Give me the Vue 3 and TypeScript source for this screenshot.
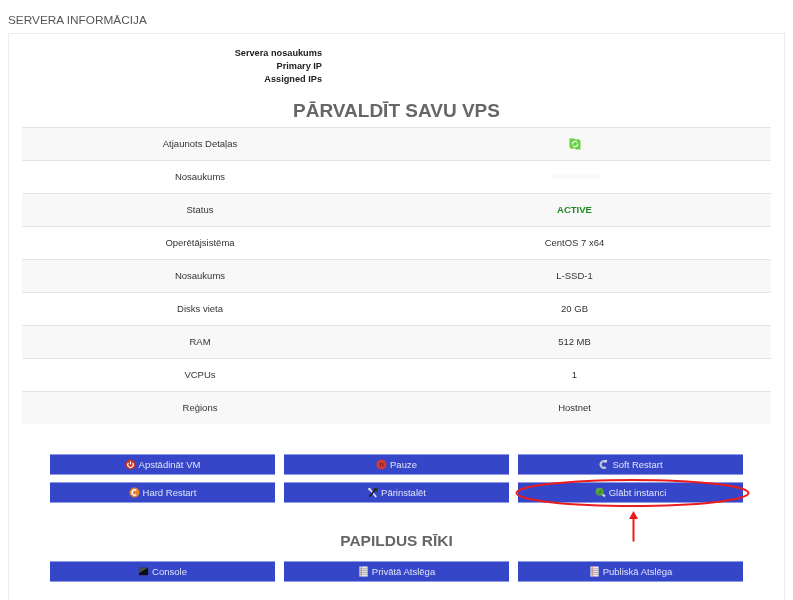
<script setup lang="ts">
const info: string[] = ['Servera nosaukums', 'Primary IP', 'Assigned IPs']
const rows: { label: string; value: string; kind?: string }[] = [
  { label: 'Atjaunots Detaļas', value: '', kind: 'refresh' },
  { label: 'Nosaukums', value: '', kind: 'hidden' },
  { label: 'Status', value: 'ACTIVE', kind: 'status' },
  { label: 'Operētājsistēma', value: 'CentOS 7 x64' },
  { label: 'Nosaukums', value: 'L-SSD-1' },
  { label: 'Disks vieta', value: '20 GB' },
  { label: 'RAM', value: '512 MB' },
  { label: 'VCPUs', value: '1' },
  { label: 'Reģions', value: 'Hostnet' },
]
const actions: { label: string; icon: string }[] = [
  { label: 'Apstādināt VM', icon: 'power' },
  { label: 'Pauze', icon: 'pause' },
  { label: 'Soft Restart', icon: 'soft' },
  { label: 'Hard Restart', icon: 'hard' },
  { label: 'Pārinstalēt', icon: 'tools' },
  { label: 'Glābt instanci', icon: 'rescue' },
]
const tools: { label: string; icon: string }[] = [
  { label: 'Console', icon: 'console' },
  { label: 'Privātā Atslēga', icon: 'sheet' },
  { label: 'Publiskā Atslēga', icon: 'sheet' },
]
</script>

<template>
  <div class="page">
    <h2 class="title">SERVERA INFORMĀCIJA</h2>
    <section class="panel">
      <div class="info">
        <div v-for="item in info" :key="item" class="info-label">{{ item }}</div>
      </div>
      <h1 class="head">PĀRVALDĪT SAVU VPS</h1>
      <div class="table">
        <div v-for="(row, i) in rows" :key="i" class="row" :class="{ odd: i % 2 === 0 }">
          <div class="cell">{{ row.label }}</div>
          <div class="cell">
            <svg v-if="row.kind === 'refresh'" class="refresh" viewBox="0 0 12 12" width="12" height="12">
              <path d="M0.500 0.500H5L6 1.500H9.500L9.500 0.500L11.500 3V8L11.500 11.500H7L6 10.500H2.500V11.500L0.500 9Z" fill="#66cf42" />
              <path d="M3.300 6.500A2.700 2.700 0 0 1 8 4.300M8.700 5.500A2.700 2.700 0 0 1 4 7.700" fill="none" stroke="#eefae6" stroke-width="1.200" />
            </svg>
            <span v-else-if="row.kind === 'hidden'" class="smudge"></span>
            <span v-else :class="{ active: row.kind === 'status' }">{{ row.value }}</span>
          </div>
        </div>
      </div>

      <div class="buttons first">
        <button v-for="a in actions" :key="a.label" class="btn" type="button">
          <svg class="ico" viewBox="0 0 12 12" width="11" height="11" :class="a.icon">
            <template v-if="a.icon === 'power'">
              <circle cx="6" cy="6" r="5.500" fill="#c8321f" />
              <path d="M3.800 4.200a3 3 0 1 0 4.400 0" fill="none" stroke="#fff" stroke-width="1.200" />
              <path d="M6 2.500v3.500" stroke="#fff" stroke-width="1.200" />
            </template>
            <template v-else-if="a.icon === 'pause'">
              <circle cx="6" cy="6" r="5.500" fill="#d23a35" />
              <path d="M4.700 4.200v3.600M7.300 4.200v3.600" stroke="#7e1512" stroke-width="1.200" />
            </template>
            <template v-else-if="a.icon === 'soft'">
              <path d="M8.500 3A3.600 3.600 0 1 0 8.500 9" fill="none" stroke="#bfc4d4" stroke-width="2.400" />
              <path d="M6.500 1l3.500 0-1 3.500z" fill="#dfe2ea" />
            </template>
            <template v-else-if="a.icon === 'hard'">
              <circle cx="6" cy="6" r="5.500" fill="#ea8130" />
              <path d="M8 3.900A2.800 2.800 0 1 0 8 8.100" fill="none" stroke="#fff" stroke-width="1.500" />
            </template>
            <template v-else-if="a.icon === 'tools'">
              <path d="M2.500 2l7.500 9" stroke="#e6e6e6" stroke-width="1.800" />
              <path d="M9 3L2.500 10.500" stroke="#1f1f1f" stroke-width="1.800" />
              <path d="M6.800 1h4.400l.3 3.500-2 .5z" fill="#2b2b2b" />
              <path d="M.8 1.500l2.700-.8.8 2.300-2.200.7z" fill="#dcdcdc" />
            </template>
            <template v-else>
              <path d="M6.500 7l4.500 3.200" stroke="#c9ccd8" stroke-width="2.200" />
              <circle cx="5" cy="5" r="4.300" fill="#5aa83c" />
              <path d="M2.800 7l4-4M4.500 7.500l3-3" stroke="#2e6b25" stroke-width=".9" />
            </template>
          </svg>
          <span>{{ a.label }}</span>
        </button>
      </div>

      <h2 class="sub">PAPILDUS RĪKI</h2>
      <div class="buttons">
        <button v-for="t in tools" :key="t.label" class="btn" type="button">
          <svg class="ico" viewBox="0 0 12 12" width="11" height="11">
            <template v-if="t.icon === 'console'">
              <rect x="1" y="2" width="10" height="8" fill="#0c0c0c" />
              <path d="M1 2h10L1 8z" fill="#4a4a4a" />
            </template>
            <template v-else>
              <rect x="1.500" y="0.500" width="9" height="11" fill="#eceae6" />
              <path d="M3.500.5v11" stroke="#d8574f" stroke-width=".8" />
              <path d="M1.500 3h9M1.500 5h9M1.500 7h9M1.500 9h9" stroke="#8b8f99" stroke-width=".7" />
            </template>
          </svg>
          <span>{{ t.label }}</span>
        </button>
      </div>
    </section>

    <svg class="mark" viewBox="0 0 793 600" width="793" height="600">
      <ellipse cx="632.500" cy="493" rx="116" ry="13" fill="none" stroke="#ea1c1c" stroke-width="2" />
      <path d="M633.500 541.500V518" stroke="#f21717" stroke-width="2" />
      <path d="M633.500 511l-4.500 8h9z" fill="#f21717" />
    </svg>
  </div>
</template>

<style scoped>
.page {
  position: relative;
  height: 600px;
  overflow: hidden;
  padding: 13px 8px 0;
  box-sizing: border-box;
  font-family: "Liberation Sans", Arial, sans-serif;
  color: #333;
  filter: blur(0.35px);
}
.title {
  margin: 0;
  height: 20px;
  font-size: 11.800px;
  line-height: 14px;
  font-weight: 400;
  color: #555;
}
.panel {
  border: 1px solid #ececec;
  width: 777px;
  height: 640px;
  box-sizing: border-box;
  padding: 13px 13px 0;
}
.info {
  width: 300px;
  display: flex;
  flex-direction: column;
  align-items: flex-end;
}
.info-label {
  font-size: 9.200px;
  line-height: 13px;
  font-weight: 700;
  color: #222;
}
.head {
  margin: 13px 0 5px;
  text-align: center;
  font-size: 19px;
  line-height: 23px;
  font-weight: 700;
  color: #666;
}
.row {
  display: grid;
  grid-template-columns: 356px 393px;
  height: 33px;
  box-sizing: border-box;
  border-top: 1px solid #e4e4e4;
  background: #fff;
}
.row.odd {
  background: #f8f8f8;
}
.cell {
  display: flex;
  align-items: center;
  justify-content: center;
  padding-bottom: 1px;
  font-size: 9.500px;
  color: #333;
}
.active {
  color: #1f8a1f;
  font-weight: 700;
}
.smudge {
  display: block;
  width: 46px;
  height: 3px;
  background: #f4f4f4;
  filter: blur(1.500px);
}
.buttons {
  display: grid;
  grid-template-columns: repeat(3, 225px);
  column-gap: 9px;
  row-gap: 7px;
  margin-left: 28px;
}
.buttons.first {
  margin-top: 30px;
}
.btn {
  display: flex;
  align-items: center;
  justify-content: center;
  gap: 3px;
  height: 21px;
  padding: 0;
  margin: 0;
  box-sizing: border-box;
  background: #3646c9;
  border: 1px solid #8f9ae4;
  border-width: 1px 0;
  color: #dfe3f6;
  font-family: inherit;
  font-size: 9.500px;
}
.sub {
  margin: 27px 0 10px;
  text-align: center;
  font-size: 15.500px;
  line-height: 21px;
  font-weight: 700;
  color: #666;
}
.mark {
  position: absolute;
  left: 0;
  top: 0;
  pointer-events: none;
}
</style>
